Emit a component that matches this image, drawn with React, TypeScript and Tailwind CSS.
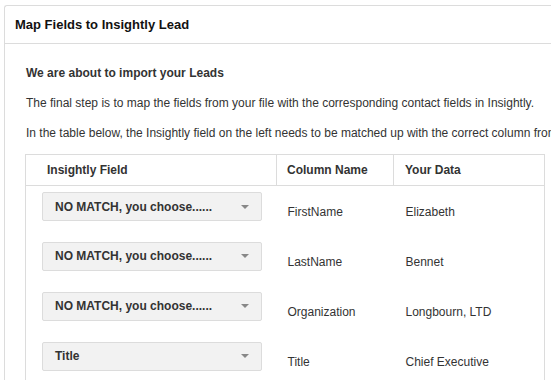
const rows = [
  { field: "NO MATCH, you choose......", column: "FirstName", data: "Elizabeth" },
  { field: "NO MATCH, you choose......", column: "LastName", data: "Bennet" },
  { field: "NO MATCH, you choose......", column: "Organization", data: "Longbourn, LTD" },
  { field: "Title", column: "Title", data: "Chief Executive" },
];

export default function App() {
  return (
    <div className="h-[380px] overflow-hidden bg-white pl-[4px] pt-[5px] font-['Liberation_Sans',Arial,sans-serif] text-[#333]">
      <div className="w-[600px] rounded-tl-[3px] border-l border-t border-[#dcdcdc]">
        <div className="flex h-[38px] items-center border-b border-[#dcdcdc] pl-[10px] pt-px">
          <h1 className="text-[13px] font-bold text-[#111]">Map Fields to Insightly Lead</h1>
        </div>
        <div className="pl-[20px] pt-[21px] text-[12px]">
          <p className="mb-[14px] pl-px leading-[16px] font-bold">We are about to import your Leads</p>
          <p className="mb-[14px] whitespace-nowrap pl-px leading-[16px]">
            The final step is to map the fields from your file with the corresponding contact fields in Insightly.
          </p>
          <p className="whitespace-nowrap pl-px leading-[16px]">
            In the table below, the Insightly field on the left needs to be matched up with the correct column from your file.
          </p>
          <table className="mt-[13px] w-[520px] border-collapse border border-[#dcdcdc] text-left">
            <thead>
              <tr className="h-[31px] border-b border-[#dcdcdc]">
                <th className="w-[251px] pl-[21px] font-bold">Insightly Field</th>
                <th className="w-[117px] border-l border-[#dcdcdc] pl-[10px] font-bold">Column Name</th>
                <th className="border-l border-[#dcdcdc] pl-[11px] font-bold">Your Data</th>
              </tr>
            </thead>
            <tbody>
              {rows.map((row) => (
                <tr key={row.column} className="h-[50px]">
                  <td className="pl-[16px] pt-[6px] align-top">
                    <div className="flex h-[29px] w-[220px] items-center justify-between rounded-[2px] border border-[#dcdcdc] bg-[#f2f2f2] pl-[12px] pr-[12px]">
                      <span className="font-bold">{row.field}</span>
                      <span className="h-0 w-0 border-l-[4px] border-r-[4px] border-t-[4px] border-l-transparent border-r-transparent border-t-[#888]" />
                    </div>
                  </td>
                  <td className="pl-[11px] pt-[18px] align-top leading-[16px]">{row.column}</td>
                  <td className="pl-[12px] pt-[18px] align-top leading-[16px]">{row.data}</td>
                </tr>
              ))}
            </tbody>
          </table>
        </div>
      </div>
    </div>
  );
}
